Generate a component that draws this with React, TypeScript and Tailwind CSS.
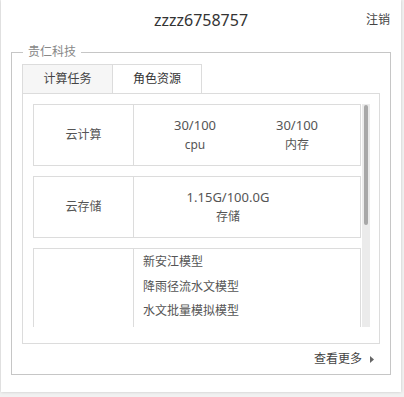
import React from "react";

const font = { fontFamily: '"Noto Sans", "Noto Sans CJK SC", sans-serif' };

function Cell({ top, bottom, w }: { top: string; bottom: string; w: string }) {
  return (
    <div className={`flex flex-col items-center ${w}`}>
      <div className="text-[13px] leading-[19px] text-[#555]">{top}</div>
      <div className="text-[12px] leading-[19px] text-[#555]">{bottom}</div>
    </div>
  );
}

export default function App() {
  return (
    <div className="w-[404px] h-[397px] bg-[#f1f1f1] overflow-hidden" style={font}>
      <div className="ml-[1px] w-[400px] h-[392px] bg-white shadow-[0_0_3px_rgba(0,0,0,0.18)] flex flex-col">
        {/* header */}
        <div className="grid grid-cols-[1fr_auto_1fr] items-center h-[40px]">
          <div />
          <div className="text-[16px] text-[#333] leading-[20px]">zzzz6758757</div>
          <div className="flex justify-end pr-[11px] text-[12px] text-[#444]">注销</div>
        </div>
        {/* fieldset */}
        <div className="relative mt-[12px] mx-[10px] h-[323px] border border-[#c6c6c6] pt-[11px] px-[10px] flex flex-col">
          <div className="absolute -top-[9px] left-[11px] px-[5px] bg-white text-[12px] leading-[16px] text-[#888]">
            贵仁科技
          </div>
          {/* tabs */}
          <div className="flex">
            <div className="w-[91px] h-[30px] border border-[#dcdcdc] bg-[#f6f6f6] flex items-center justify-center text-[12px] text-[#444]">
              计算任务
            </div>
            <div className="-ml-px w-[90px] h-[30px] border border-[#dcdcdc] border-b-white bg-white flex items-center justify-center text-[12px] text-[#333]">
              角色资源
            </div>
          </div>
          {/* panel */}
          <div className="-mt-px h-[251px] border border-[#dcdcdc] pt-[10px] pl-[10px] pr-[9px] pb-[16px] flex gap-[1px]">
            <div className="w-[328px] h-[223px] overflow-hidden flex flex-col gap-[10px]">
              <div className="shrink-0 h-[62px] border border-[#dcdcdc] flex">
                <div className="w-[100px] border-r border-[#dcdcdc] flex items-center justify-center text-[12px] text-[#555]">
                  云计算
                </div>
                <div className="flex-1 flex items-center pl-[10px]">
                  <Cell top="30/100" bottom="cpu" w="w-[102px]" />
                  <Cell top="30/100" bottom="内存" w="w-[102px]" />
                </div>
              </div>
              <div className="shrink-0 h-[62px] border border-[#dcdcdc] flex">
                <div className="w-[100px] border-r border-[#dcdcdc] flex items-center justify-center text-[12px] text-[#555]">
                  云存储
                </div>
                <div className="flex-1 flex items-center pl-[10px]">
                  <Cell top="1.15G/100.0G" bottom="存储" w="w-[168px]" />
                </div>
              </div>
              <div className="shrink-0 h-[100px] border border-[#dcdcdc] flex">
                <div className="w-[100px] border-r border-[#dcdcdc]" />
                <div className="flex-1 pl-[9px] pt-[1px] text-[12px] leading-[24.5px] text-[#555]">
                  <div>新安江模型</div>
                  <div>降雨径流水文模型</div>
                  <div>水文批量模拟模型</div>
                </div>
              </div>
            </div>
            {/* scrollbar */}
            <div className="w-[8px] h-[223px] bg-[#ebebeb] flex justify-center pt-[1px]">
              <div className="w-[4px] h-[120px] rounded-[2px] bg-[#a8a8a8]" />
            </div>
          </div>
          {/* footer */}
          <div className="flex-1 flex items-center justify-end pr-[5px]">
            <span className="text-[12px] text-[#444]">查看更多</span>
            <svg width="5" height="7" viewBox="0 0 5 7" className="ml-[8px]">
              <path d="M0 0 L4 3.5 L0 7 Z" fill="#666" />
            </svg>
          </div>
        </div>
      </div>
    </div>
  );
}
